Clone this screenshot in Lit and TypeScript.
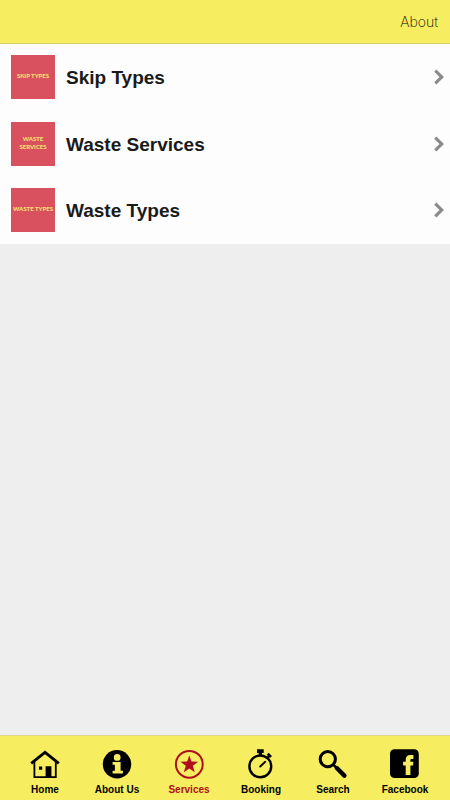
import { LitElement, html, css, svg } from "lit";
import { customElement } from "lit/decorators.js";
import { classMap } from "lit/directives/class-map.js";

const rows = [
  { title: "Skip Types", badge: "SKIP TYPES" },
  { title: "Waste Services", badge: "WASTE SERVICES" },
  { title: "Waste Types", badge: "WASTE TYPES" },
];

const tabs = [
  {
    label: "Home",
    icon: svg`
      <path d="M1.2 14.4 15 3.4l13.8 11" fill="none" stroke="currentColor" stroke-width="2.8"/>
      <path d="M4.4 13v15.2h21.4V13" fill="none" stroke="currentColor" stroke-width="1.8"/>
      <path d="M15.6 17.2h5.8v11h-5.8zM9 17.6h3.2v3.2H9z" fill="currentColor"/>`,
  },
  {
    label: "About Us",
    icon: svg`
      <circle cx="15" cy="15.2" r="14.2" fill="currentColor"/>
      <circle class="cut" cx="15.2" cy="8.4" r="3.4"/>
      <path class="cut" d="M10.6 13h8v8.8h2.3v2.8H10.6v-2.8h2.3v-6h-2.3z"/>`,
  },
  {
    label: "Services",
    active: true,
    icon: svg`
      <circle cx="15.3" cy="15.3" r="13.4" fill="none" stroke="currentColor" stroke-width="2"/>
      <path d="M15.3 6.4l2.2 6.2 6.6.2-5.3 4 2 6.4-5.5-3.8-5.5 3.8 2-6.4-5.3-4 6.6-.2z" fill="currentColor"/>`,
  },
  {
    label: "Booking",
    icon: svg`
      <circle cx="14.3" cy="17.4" r="10.9" fill="none" stroke="currentColor" stroke-width="2.4"/>
      <path d="M11 .2h6.7v3.8H16V7h-3.3V4H11z" fill="currentColor"/>
      <path d="M20.8 9.4l2.6-2.6" fill="none" stroke="currentColor" stroke-width="2"/>
      <path d="M21.7 4.8l3.3 3.2" fill="none" stroke="currentColor" stroke-width="2.8"/>
      <path d="M14.2 17.5l5-4.7" fill="none" stroke="currentColor" stroke-width="1.9" stroke-linecap="round"/>`,
  },
  {
    label: "Search",
    icon: svg`
      <circle cx="9.8" cy="10.1" r="7.6" fill="none" stroke="currentColor" stroke-width="3"/>
      <path d="M15 15.4l4 4" fill="none" stroke="currentColor" stroke-width="2.4"/>
      <path d="M18.8 19l7.6 7.6" fill="none" stroke="currentColor" stroke-width="4.4" stroke-linecap="round"/>`,
  },
  {
    label: "Facebook",
    icon: svg`
      <rect x="0" y=".2" width="28.8" height="28.8" rx="4.6" fill="currentColor"/>
      <path class="cut" d="M23.4 6v4h-1.6c-1 0-1.4.5-1.4 1.4v1.3h3l-.4 3.8h-2.6v9.6h-4.7v-9.6h-2.6v-3.8h2.6v-1.9C15.700 7.600 17.400 6 20.300 6z"/>`,
  },
];

@customElement("app-root")
export class AppRoot extends LitElement {
  static styles = css`
    :host {
      display: flex;
      flex-direction: column;
      min-height: 100vh;
      background: #eeeeee;
      color: #000;
      font-family: "Liberation Sans", Arial, sans-serif;
    }
    header {
      box-sizing: border-box;
      height: 44px;
      display: flex;
      align-items: center;
      justify-content: flex-end;
      padding: 1px 12px 0;
      background: #f7ed60;
      border-bottom: 1px solid #d6cf6c;
    }
    button {
      border: 0;
      margin: 0;
      padding: 0;
      background: none;
      color: inherit;
      cursor: pointer;
    }
    .about {
      font: 200 14px/20px Inter, "Liberation Sans", sans-serif;
    }
    main {
      flex: 1;
    }
    ul {
      list-style: none;
      margin: 0;
      padding: 0;
      background: #fdfdfd;
    }
    .row {
      display: flex;
      align-items: center;
      gap: 11px;
      padding: 11px 6px 12px 11px;
      color: #1a1a1a;
      text-decoration: none;
    }
    li:last-child .row {
      padding: 10px 6px 12px 11px;
    }
    .thumb {
      flex: none;
      box-sizing: border-box;
      width: 44px;
      height: 44px;
      padding-bottom: 2px;
      display: flex;
      align-items: center;
      justify-content: center;
      background: #d9515f;
      color: #f5e070;
      font: 900 6px/8px Lato, "Open Sans", sans-serif;
      text-align: center;
    }
    .title {
      flex: 1;
      padding-top: 2px;
      font-size: 19px;
      line-height: 24px;
      font-weight: 700;
    }
    .chevron {
      width: 10px;
      height: 16px;
      flex: none;
      color: #8b8b8b;
    }
    nav {
      box-sizing: border-box;
      display: grid;
      grid-template-columns: repeat(6, 1fr);
      padding: 13px 9px 4px;
      background: #f7ed60;
      border-top: 1px solid #dcd58a;
    }
    .tab {
      display: flex;
      flex-direction: column;
      align-items: center;
      gap: 5px;
      text-decoration: none;
      color: #000;
      font-size: 10px;
      line-height: 12px;
      font-weight: 700;
    }
    .tab.active {
      color: #ae0f1c;
    }
    .tab svg {
      width: 30px;
      height: 30px;
    }
    .cut {
      fill: #f7ed60;
    }
  `;

  render() {
    return html`
      <header><button class="about" type="button">About</button></header>
      <main>
        <ul>
          ${rows.map(
            (r) => html`<li>
              <a class="row" href="#">
                <span class="thumb" aria-hidden="true">${r.badge}</span>
                <span class="title">${r.title}</span>
                <svg class="chevron" viewBox="0 0 10 16" aria-hidden="true">
                  <path d="M1.3 1.600 7.800 8l-6.500 6.400" fill="none" stroke="currentColor" stroke-width="3.2" />
                </svg>
              </a>
            </li>`
          )}
        </ul>
      </main>
      <nav aria-label="Main">
        ${tabs.map(
          (t) => html`<a class=${classMap({ tab: true, active: !!t.active })} href="#">
            <svg viewBox="0 0 30 30" aria-hidden="true">${t.icon}</svg>
            <span>${t.label}</span>
          </a>`
        )}
      </nav>
    `;
  }
}
